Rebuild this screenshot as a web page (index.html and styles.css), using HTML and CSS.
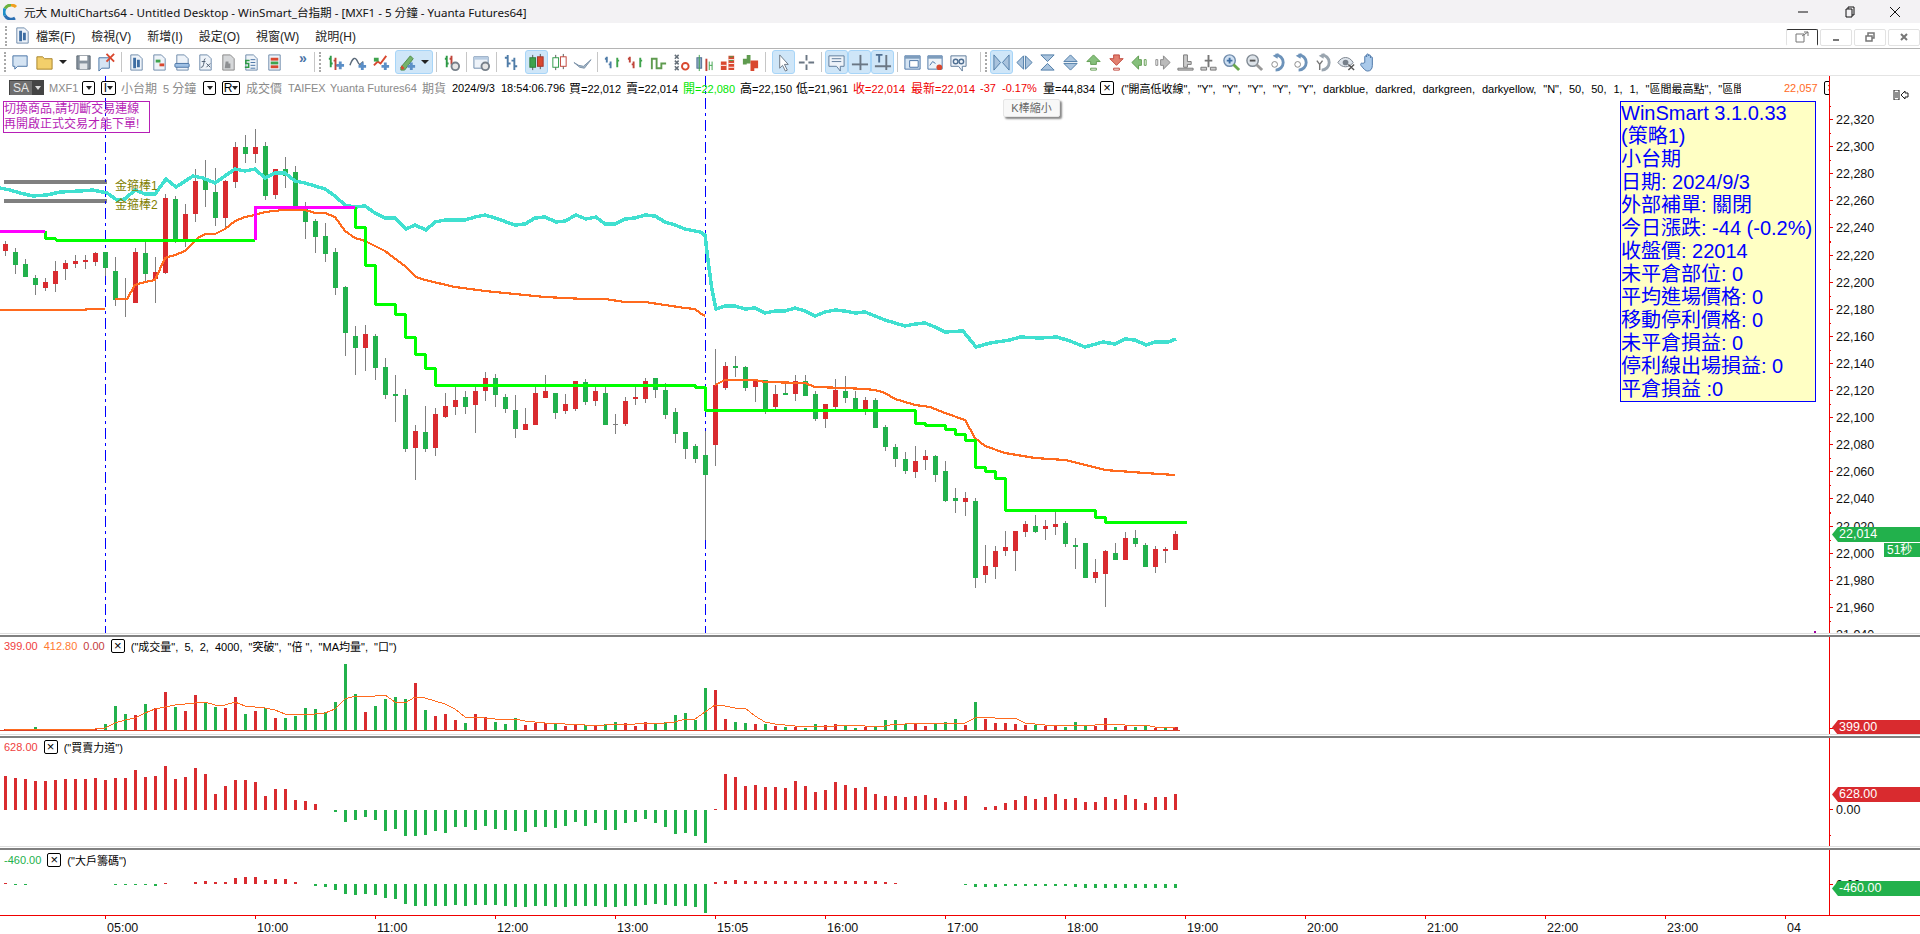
FILE: index.html
```html
<!DOCTYPE html>
<html lang="zh-Hant">
<head>
  <meta charset="UTF-8">
  <title>元大 MultiCharts64</title>
  <link rel="stylesheet" href="styles.css">
</head>
<body>
  <svg class="defs" width="0" height="0">
    <symbol id="doc" viewBox="0 0 20 20"><path d="M4 2h8l4 4v12H4z" fill="#eef3f9" stroke="#6f8bab"/></symbol>
    <symbol id="i-new" viewBox="0 0 20 20"><path d="M2 3h15v11H7l-3 3v-3H2z" fill="#d5e4f3" stroke="#4a74a5"/></symbol>
    <symbol id="i-folder" viewBox="0 0 20 20"><path d="M2 4h6l2 2h8v11H2z" fill="#f3cf6b" stroke="#a8842a"/></symbol>
    <symbol id="i-save" viewBox="0 0 20 20"><path d="M3 3h14v14H3z" fill="#87929e" stroke="#5d6873"/><rect x="6" y="3" width="8" height="5" fill="#fff"/><rect x="6" y="11" width="8" height="6" fill="#e2e5e9"/></symbol>
    <symbol id="i-docx" viewBox="0 0 20 20"><path d="M2 5h11v11H5l-3 3z" fill="#d5e4f3" stroke="#4a74a5"/><path d="M10 1l8 8M18 1l-8 8" stroke="#d9482f" stroke-width="2"/></symbol>
    <symbol id="i-doc1" viewBox="0 0 20 20"><use href="#doc"/><path d="M8 5v11M12 7v8" stroke="#3f6ea3" stroke-width="3"/></symbol>
    <symbol id="i-doc2" viewBox="0 0 20 20"><use href="#doc"/><rect x="6" y="7" width="5" height="3" fill="#3fa34d"/><rect x="10" y="11" width="5" height="3" fill="#d9482f"/></symbol>
    <symbol id="i-doc3" viewBox="0 0 20 20"><use href="#doc"/><rect x="2" y="11" width="15" height="4" rx="1" fill="#9fc0e4" stroke="#4a74a5"/></symbol>
    <symbol id="i-doc4" viewBox="0 0 20 20"><use href="#doc"/><path d="M10 6c-2 0-1 3-2 6s-1 3-3 3M6 9h4M11 11l4 4M15 11l-4 4" fill="none" stroke="#4a5b6e"/></symbol>
    <symbol id="i-doc5" viewBox="0 0 20 20"><path d="M4 2h8l4 4v12H4z" fill="#d6d8da" stroke="#888"/><path d="M7 9h3v2h2v5H6z" fill="#8d8f92"/></symbol>
    <symbol id="i-doc6" viewBox="0 0 20 20"><use href="#doc"/><path d="M9 7h5M9 10h5M9 13h5M9 16h5" stroke="#4a74a5"/><path d="M8 8H4v3h3v4H3" fill="none" stroke="#2e9a47" stroke-width="1.6"/></symbol>
    <symbol id="i-doc7" viewBox="0 0 20 20"><path d="M4 2h12v16H4z" fill="#eef3f9" stroke="#6f8bab"/><rect x="6" y="5" width="8" height="3" fill="#d9482f"/><rect x="6" y="9" width="8" height="3" fill="#3fa34d"/><rect x="6" y="13" width="8" height="3" fill="#d9482f"/></symbol>
    <symbol id="i-bars" viewBox="0 0 20 20"><path d="M5 3v12M5 6H3M5 11h2" stroke="#2e9a47" stroke-width="2" fill="none"/><path d="M10 5v13M10 8H8M10 13h2" stroke="#c0453a" stroke-width="2" fill="none"/><path d="M15 9v8M11 13h8" stroke="#5b8fc7" stroke-width="3"/></symbol>
    <symbol id="i-wave" viewBox="0 0 20 20"><path d="M1 13c3-9 6-9 8-4s3 3 6 0" fill="none" stroke="#5b6a7a" stroke-width="1.5"/><path d="M14 10v8M10 14h8" stroke="#5b8fc7" stroke-width="3"/></symbol>
    <symbol id="i-trend" viewBox="0 0 20 20"><path d="M2 13l4-4 3 2 6-8" fill="none" stroke="#d9482f" stroke-width="2"/><rect x="2" y="5" width="5" height="4" fill="#3fa34d"/><path d="M14 10v8M10 14h8" stroke="#5b8fc7" stroke-width="3"/></symbol>
    <symbol id="i-pencil" viewBox="0 0 20 20"><path d="M3 15L13 3l3 3L7 18H3z" fill="#74b36b" stroke="#4f8a47"/><path d="M3 15l1-2 3 3-3 2z" fill="#d9482f"/><path d="M14 10v8M10 14h8" stroke="#5b8fc7" stroke-width="3"/></symbol>
    <symbol id="i-gearb" viewBox="0 0 20 20"><path d="M5 3v12M5 6H3M5 11h2" stroke="#2e9a47" stroke-width="2" fill="none"/><path d="M10 3v9M10 6H8" stroke="#c0453a" stroke-width="2" fill="none"/><circle cx="14" cy="14" r="4" fill="#e6e6e6" stroke="#77808a" stroke-width="2"/></symbol>
    <symbol id="i-wgear" viewBox="0 0 20 20"><path d="M2 4h15v12H2z" fill="#eef3f9" stroke="#6f8bab"/><path d="M2 4h15v3H2z" fill="#b8cce2"/><circle cx="14" cy="14" r="4" fill="#e6e6e6" stroke="#77808a" stroke-width="2"/></symbol>
    <symbol id="i-hlc" viewBox="0 0 20 20"><path d="M6 2v13M6 5H3M6 11h3M13 5v13M13 8h-3M13 14h3" fill="none" stroke="#4f7ca8" stroke-width="2"/></symbol>
    <symbol id="i-cand" viewBox="0 0 20 20"><path d="M6 2v16M14 1v16" stroke="#555"/><rect x="3" y="5" width="6" height="10" fill="#3fa34d" stroke="#2e7d3a"/><rect x="11" y="4" width="6" height="10" fill="#d9482f" stroke="#a3322a"/></symbol>
    <symbol id="i-candh" viewBox="0 0 20 20"><path d="M6 2v16M14 1v16" stroke="#555"/><rect x="3" y="5" width="6" height="10" fill="#fff" stroke="#2e9a47"/><rect x="11" y="4" width="6" height="10" fill="#fff" stroke="#c0453a"/></symbol>
    <symbol id="i-line" viewBox="0 0 20 20"><path d="M1 10l5 3 5 1 8-7-7 9-5-1z" fill="#a7bacb" stroke="#7a90a6"/></symbol>
    <symbol id="i-pg1" viewBox="0 0 20 20"><path d="M4 4v6M4 6H2M8 9v7M8 12H6" stroke="#4f7ca8" stroke-width="2" fill="none"/><path d="M15 5v10M15 8h2" stroke="#3fa34d" stroke-width="2" fill="none"/></symbol>
    <symbol id="i-pg2" viewBox="0 0 20 20"><path d="M4 4v6M4 6H2M8 9v7M8 12H6" stroke="#c0453a" stroke-width="2" fill="none"/><path d="M15 5v10M15 8h2" stroke="#3fa34d" stroke-width="2" fill="none"/></symbol>
    <symbol id="i-sq" viewBox="0 0 20 20"><path d="M3 17V6h5v10h5v-5h5" fill="none" stroke="#5f9b4f" stroke-width="2"/></symbol>
    <symbol id="i-xo" viewBox="0 0 20 20"><path d="M3 2l4 4M7 2L3 6M3 8l4 4M7 8l-4 4M3 14l4 4M7 14l-4 4" stroke="#66707a" stroke-width="1.6"/><circle cx="14" cy="14" r="3.5" fill="none" stroke="#d9482f" stroke-width="2"/></symbol>
    <symbol id="i-ch" viewBox="0 0 20 20"><rect x="2" y="5" width="5" height="11" fill="#8fa8c4" stroke="#4f6f92"/><path d="M12 6v13" stroke="#c0453a" stroke-width="2"/><path d="M4.5 2v17M15 9v9M18 9v9M15 13h3" stroke="#3fa34d"/></symbol>
    <symbol id="i-blk" viewBox="0 0 20 20"><path d="M3 9h6v9H3zM11 3h6v15h-6z" fill="#d9482f"/><path d="M3 13h6M11 7h6M11 11h6M11 15h6" stroke="#fff"/><path d="M12 4h4M12 8h4" stroke="#3fa34d"/></symbol>
    <symbol id="i-vol" viewBox="0 0 20 20"><path d="M2 6h4v6H2zM6 2h4v9H6z" fill="#5f9b4f"/><path d="M10 8h4v11h-4zM14 8h4v8h-4z" fill="#d9482f"/></symbol>
    <symbol id="i-cur" viewBox="0 0 20 20"><path d="M6 2v14l3-3 3 6 2-1-3-6h4z" fill="#fff" stroke="#6b7784"/></symbol>
    <symbol id="i-cross" viewBox="0 0 20 20"><path d="M10 2v6M10 12v6M2 10h6M12 10h6" stroke="#6b7784" stroke-width="2"/></symbol>
    <symbol id="i-note" viewBox="0 0 20 20"><path d="M2 3h16v11h-4v5l-4-5H2z" fill="#eef3f9" stroke="#5e7a99"/><path d="M5 6h10M5 9h10" stroke="#5e7a99"/></symbol>
    <symbol id="i-hl" viewBox="0 0 20 20"><path d="M11 2v16" stroke="#6b7784" stroke-width="2"/><path d="M2 12h17" stroke="#6b7784" stroke-width="2"/></symbol>
    <symbol id="i-tl" viewBox="0 0 20 20"><path d="M14 2v16M2 14h17" stroke="#6b7784" stroke-width="2"/><path d="M3 2h7M6.5 2v8" stroke="#4f6f92" stroke-width="2"/></symbol>
    <symbol id="i-win" viewBox="0 0 20 20"><path d="M2 3h16v14H2z" fill="#d5e4f3" stroke="#4a74a5"/><path d="M2 3h16v3H2z" fill="#7d9cbc"/><path d="M7 8h9v7H7z" fill="#fff" stroke="#4a74a5"/></symbol>
    <symbol id="i-wchart" viewBox="0 0 20 20"><path d="M2 3h15v14H2z" fill="#eef3f9" stroke="#4a74a5"/><path d="M2 3h15v3H2z" fill="#7d9cbc"/><path d="M4 13l3-4 3 2" fill="none" stroke="#4a74a5"/><circle cx="14" cy="15" r="3" fill="#d9482f"/></symbol>
    <symbol id="i-find" viewBox="0 0 20 20"><path d="M2 3h16v11h-4v5l-4-5H2z" fill="#eef3f9" stroke="#5e7a99"/><circle cx="7" cy="9" r="2.4" fill="none" stroke="#4f6f92" stroke-width="1.5"/><circle cx="13" cy="9" r="2.4" fill="none" stroke="#4f6f92" stroke-width="1.5"/></symbol>
    <symbol id="i-hshrink" viewBox="0 0 20 20"><path d="M2 2l7 8-7 8zM18 2l-7 8 7 8z" fill="#a9c3dd" stroke="#4f7ca8"/></symbol>
    <symbol id="i-hgrow" viewBox="0 0 20 20"><path d="M9 3l-7 7 7 7zM11 3l7 7-7 7z" fill="#a9c3dd" stroke="#4f7ca8"/></symbol>
    <symbol id="i-vshrink" viewBox="0 0 20 20"><path d="M3 2h14l-7 7zM3 18h14l-7-7z" fill="#a9c3dd" stroke="#4f7ca8"/></symbol>
    <symbol id="i-vgrow" viewBox="0 0 20 20"><path d="M3 9l7-7 7 7zM3 11l7 7 7-7z" fill="#a9c3dd" stroke="#4f7ca8"/></symbol>
    <symbol id="i-up" viewBox="0 0 20 20"><path d="M10 2l7 7h-4v3H7V9H3z" fill="#86c07c" stroke="#5f9b4f"/><path d="M7 16h6v2H7z" fill="#fff" stroke="#5f9b4f"/></symbol>
    <symbol id="i-down" viewBox="0 0 20 20"><path d="M7 2h6v4h4l-7 7-7-7h4z" fill="#e28070" stroke="#c0453a"/><path d="M7 16h6v2H7z" fill="#fff" stroke="#c0453a"/></symbol>
    <symbol id="i-left" viewBox="0 0 20 20"><path d="M2 10l7-7v4h3v6H9v4z" fill="#86c07c" stroke="#5f9b4f"/><path d="M15 7h2v6h-2z" fill="#fff" stroke="#5f9b4f"/></symbol>
    <symbol id="i-right" viewBox="0 0 20 20"><path d="M18 10l-7-7v4H8v6h3v4z" fill="#bbb" stroke="#888"/><path d="M3 7h2v6H3z" fill="#fff" stroke="#888"/></symbol>
    <symbol id="i-tee" viewBox="0 0 20 20"><path d="M8 2h4v7h4v3H12v3H8z" fill="#ccc" stroke="#777"/><path d="M2 16h16v2H2z" fill="#ccc" stroke="#777"/></symbol>
    <symbol id="i-tee2" viewBox="0 0 20 20"><path d="M10 2v13M6 8h8" stroke="#777" stroke-width="2"/><path d="M2 15h6v3H2zM12 15h6v3h-6z" fill="#ccc" stroke="#777"/></symbol>
    <symbol id="i-zin" viewBox="0 0 20 20"><circle cx="8" cy="8" r="6" fill="#cfe0f2" stroke="#6f8bab" stroke-width="1.5"/><path d="M12 12l6 6" stroke="#6aa84f" stroke-width="3"/><path d="M8 5v6M5 8h6" stroke="#3f6ea3" stroke-width="2"/></symbol>
    <symbol id="i-zout" viewBox="0 0 20 20"><circle cx="8" cy="8" r="6" fill="#dde3e9" stroke="#808a94" stroke-width="1.5"/><path d="M12 12l6 6" stroke="#999" stroke-width="3"/><path d="M5 8h6" stroke="#555" stroke-width="2"/></symbol>
    <symbol id="i-rot" viewBox="0 0 20 20"><path d="M8 2a8 8 0 1 1 0 16" fill="none" stroke="#6d93ba" stroke-width="3"/><path d="M11 0L5 3l5 3z" fill="#6d93ba"/><circle cx="7" cy="12" r="3" fill="#fff" stroke="#888"/></symbol>
    <symbol id="i-roty" viewBox="0 0 20 20"><path d="M8 2a8 8 0 1 1 0 16" fill="none" stroke="#9aa5af" stroke-width="3"/><path d="M11 0L5 3l5 3z" fill="#9aa5af"/><path d="M3 8l3 4 3-4M6 12v6" fill="none" stroke="#777" stroke-width="1.5"/></symbol>
    <symbol id="i-eye" viewBox="0 0 20 20"><path d="M1 10c4-7 12-7 16 0-4 6-12 6-16 0z" fill="#dfe5ec" stroke="#77808a"/><circle cx="9" cy="10" r="3" fill="#77808a"/><path d="M12 12l6 6M18 12l-6 6" stroke="#555" stroke-width="1.5"/></symbol>
    <symbol id="i-hand" viewBox="0 0 20 20"><path d="M5 10V4a1 1 0 0 1 2 0V2a1 1 0 0 1 2 0v1a1 1 0 0 1 2 0v2a1 1 0 0 1 2 0v8c0 4-2 6-5 6-2 0-4-2-7-6-1-2 1-3 2-2z" fill="#a9c9ea" stroke="#4a74a5"/></symbol>
  </svg>

  <header class="titlebar">
    <svg class="logo" viewBox="0 0 16 16">
      <path d="M8 1a7 7 0 0 0-6 3.5" fill="none" stroke="#6cb33f" stroke-width="3"/>
      <path d="M2 4.500a7 7 0 0 0 0 7" fill="none" stroke="#1f8fc9" stroke-width="3"/>
      <path d="M2 11.500A7 7 0 0 0 12 14" fill="none" stroke="#2b6fb3" stroke-width="3"/>
      <path d="M8 1a7 7 0 0 1 5 2" fill="none" stroke="#f0a020" stroke-width="3"/>
    </svg>
    <span class="title">元大 MultiCharts64 - Untitled Desktop - WinSmart_台指期 - [MXF1 - 5 分鐘 - Yuanta Futures64]</span>
    <div class="winctl">
      <svg viewBox="0 0 12 12"><path d="M1 6h10" stroke="#111"/></svg>
      <svg viewBox="0 0 12 12"><path d="M3 3h6v8H3zM5 3V1h6v8H9" fill="none" stroke="#111"/></svg>
      <svg viewBox="0 0 12 12"><path d="M1 1l10 10M11 1L1 11" stroke="#111"/></svg>
    </div>
  </header>

  <nav class="menubar">
    <i class="grip"></i>
    <svg class="ico menu-ico"><use href="#i-doc1"/></svg>
    <ul class="menu">
      <li>檔案(F)</li>
      <li>檢視(V)</li>
      <li>新增(I)</li>
      <li>設定(O)</li>
      <li>視窗(W)</li>
      <li>說明(H)</li>
    </ul>
    <div class="mdi">
      <button class="active"><svg viewBox="0 0 14 12"><path d="M1 3h8v8H1zM7 5l6-4M9 1h4v4" fill="none" stroke="#777"/></svg></button>
      <button><svg viewBox="0 0 14 12"><path d="M4 9h6" stroke="#777" stroke-width="2"/></svg></button>
      <button><svg viewBox="0 0 14 12"><path d="M3 5h6v5H3zM5 5V2h6v5H9" fill="none" stroke="#777" stroke-width="1.5"/></svg></button>
      <button><svg viewBox="0 0 14 12"><path d="M4 3l6 6M10 3L4 9" stroke="#777" stroke-width="2"/></svg></button>
    </div>
  </nav>

  <div class="toolbar">
    <i class="grip"></i>
    <span class="tool"><svg class="ico"><use href="#i-new"/></svg></span>
    <span class="tool ml1"><svg class="ico"><use href="#i-folder"/></svg></span>
    <span class="caret"></span>
    <span class="tool ml2"><svg class="ico"><use href="#i-save"/></svg></span>
    <span class="tool"><svg class="ico"><use href="#i-docx"/></svg></span>
    <i class="sep"></i>
    <span class="tool"><svg class="ico"><use href="#i-doc1"/></svg></span>
    <span class="tool"><svg class="ico"><use href="#i-doc2"/></svg></span>
    <span class="tool"><svg class="ico"><use href="#i-doc3"/></svg></span>
    <span class="tool"><svg class="ico"><use href="#i-doc4"/></svg></span>
    <span class="tool"><svg class="ico"><use href="#i-doc5"/></svg></span>
    <span class="tool"><svg class="ico"><use href="#i-doc6"/></svg></span>
    <span class="tool"><svg class="ico"><use href="#i-doc7"/></svg></span>
    <span class="more">»</span>
    <i class="sep tight"></i>
    <i class="grip"></i>
    <span class="tool"><svg class="ico"><use href="#i-bars"/></svg></span>
    <span class="tool"><svg class="ico"><use href="#i-wave"/></svg></span>
    <span class="tool"><svg class="ico"><use href="#i-trend"/></svg></span>
    <span class="combo ml2"><svg class="ico"><use href="#i-pencil"/></svg><span class="caret"></span></span>
    <i class="sep"></i>
    <span class="tool"><svg class="ico"><use href="#i-gearb"/></svg></span>
    <i class="sep"></i>
    <span class="tool"><svg class="ico"><use href="#i-wgear"/></svg></span>
    <i class="sep"></i>
    <span class="tool"><svg class="ico"><use href="#i-hlc"/></svg></span>
    <span class="tool on ml2"><svg class="ico"><use href="#i-cand"/></svg></span>
    <span class="tool"><svg class="ico"><use href="#i-candh"/></svg></span>
    <span class="tool"><svg class="ico"><use href="#i-line"/></svg></span>
    <i class="sep"></i>
    <span class="tool"><svg class="ico"><use href="#i-pg1"/></svg></span>
    <span class="tool"><svg class="ico"><use href="#i-pg2"/></svg></span>
    <span class="tool"><svg class="ico"><use href="#i-sq"/></svg></span>
    <span class="tool"><svg class="ico"><use href="#i-xo"/></svg></span>
    <span class="tool"><svg class="ico"><use href="#i-ch"/></svg></span>
    <span class="tool"><svg class="ico"><use href="#i-blk"/></svg></span>
    <span class="tool"><svg class="ico"><use href="#i-vol"/></svg></span>
    <i class="sep"></i>
    <span class="tool on ml3"><svg class="ico"><use href="#i-cur"/></svg></span>
    <span class="tool"><svg class="ico"><use href="#i-cross"/></svg></span>
    <i class="sep"></i>
    <span class="tool on"><svg class="ico"><use href="#i-note"/></svg></span>
    <span class="tool on"><svg class="ico"><use href="#i-hl"/></svg></span>
    <span class="tool on"><svg class="ico"><use href="#i-tl"/></svg></span>
    <i class="sep"></i>
    <span class="tool"><svg class="ico"><use href="#i-win"/></svg></span>
    <span class="tool"><svg class="ico"><use href="#i-wchart"/></svg></span>
    <span class="tool"><svg class="ico"><use href="#i-find"/></svg></span>
    <i class="sep end"></i>
    <i class="grip"></i>
    <span class="tool on"><svg class="ico"><use href="#i-hshrink"/></svg></span>
    <span class="tool"><svg class="ico"><use href="#i-hgrow"/></svg></span>
    <span class="tool"><svg class="ico"><use href="#i-vshrink"/></svg></span>
    <span class="tool"><svg class="ico"><use href="#i-vgrow"/></svg></span>
    <span class="tool"><svg class="ico"><use href="#i-up"/></svg></span>
    <span class="tool"><svg class="ico"><use href="#i-down"/></svg></span>
    <span class="tool"><svg class="ico"><use href="#i-left"/></svg></span>
    <span class="tool"><svg class="ico"><use href="#i-right"/></svg></span>
    <span class="tool"><svg class="ico"><use href="#i-tee"/></svg></span>
    <span class="tool"><svg class="ico"><use href="#i-tee2"/></svg></span>
    <span class="tool"><svg class="ico"><use href="#i-zin"/></svg></span>
    <span class="tool"><svg class="ico"><use href="#i-zout"/></svg></span>
    <span class="tool"><svg class="ico"><use href="#i-rot"/></svg></span>
    <span class="tool"><svg class="ico"><use href="#i-rot"/></svg></span>
    <span class="tool"><svg class="ico"><use href="#i-roty"/></svg></span>
    <span class="tool"><svg class="ico"><use href="#i-eye"/></svg></span>
    <span class="tool"><svg class="ico"><use href="#i-hand"/></svg></span>
  </div>

  <main class="chart">
    <section class="pane pane-price">
      <svg class="plot" id="plot-price" viewBox="0 76 1920 557"></svg>
      <div class="legend legend-price">
        <span class="sa"><b>SA</b><i class="sa-arrow"></i></span>
        <span class="muted">MXF1</span>
        <span class="pick"><i class="caret"></i></span>
        <span class="pick wide">I<i class="caret"></i></span>
        <span class="muted zh">小台期</span>
        <span class="muted">5 <span class="zh">分鐘</span></span>
        <span class="pick"><i class="caret"></i></span>
        <span class="pick wider">R<i class="caret"></i></span>
        <span class="muted zh">成交價</span>
        <span class="muted">TAIFEX</span>
        <span class="muted">Yuanta Futures64</span>
        <span class="muted zh">期貨</span>
        <span>2024/9/3</span>
        <span>18:54:06.796</span>
        <span><span class="zh">買</span>=22,012</span>
        <span><span class="zh">賣</span>=22,014</span>
        <span class="lime"><span class="zh">開</span>=22,080</span>
        <span><span class="zh">高</span>=22,150</span>
        <span><span class="zh">低</span>=21,961</span>
        <span class="red"><span class="zh">收</span>=22,014</span>
        <span class="red"><span class="zh">最新</span>=22,014</span>
        <span class="red">-37</span>
        <span class="red">-0.17%</span>
        <span><span class="zh">量</span>=44,834</span>
        <span class="xbox">×</span>
        <span class="args">("開高低收線",  "Y",  "Y",  "Y",  "Y",  "Y",  darkblue,  darkred,  darkgreen,  darkyellow,  "N",  50,  50,  1,  1,  "區間最高點",  "區間</span>
        <span class="last">22,057</span>
        <span class="xbox">×</span>
      </div>
      <div class="notice">切換商品,請切斷交易連線<br>再開啟正式交易才能下單!</div>
      <span class="gold gold-1">金箍棒1</span>
      <span class="gold gold-2">金箍棒2</span>
      <div class="tooltip">K棒縮小</div>
      <div class="status">
        <div>WinSmart 3.1.0.33</div>
        <div>(策略1)</div>
        <div>小台期</div>
        <div>日期: 2024/9/3</div>
        <div>外部補單: 關閉</div>
        <div>今日漲跌: -44 (-0.2%)</div>
        <div>收盤價: 22014</div>
        <div>未平倉部位: 0</div>
        <div>平均進場價格: 0</div>
        <div>移動停利價格: 0</div>
        <div>未平倉損益: 0</div>
        <div>停利線出場損益: 0</div>
        <div>平倉損益 :0</div>
      </div>
      <svg class="side-ico" viewBox="0 0 16 10"><path d="M1 0h5v10H1zM2 3h3M2 5h3M2 7h3" fill="none" stroke="#222"/><path d="M8 5l4-4v2h3v4h-3v2z" fill="#fff" stroke="#222"/></svg>
      <span class="tag up tag-price">22,014</span>
      <span class="tag up tag-secs">51秒</span>
    </section>
    <div class="divider"></div>

    <section class="pane pane-vol">
      <svg class="plot" id="plot-vol" viewBox="0 637 1920 97"></svg>
      <div class="legend">
        <span class="v-red">399.00</span>
        <span class="v-orange">412.80</span>
        <span class="v-dark">0.00</span>
        <span class="xbox">×</span>
        <span class="args">("成交量",  5,  2,  4000,  "突破",  "倍 ",  "MA均量",  "口")</span>
      </div>
      <span class="tag down tag-vol">399.00</span>
    </section>
    <div class="divider"></div>

    <section class="pane pane-force">
      <svg class="plot" id="plot-force" viewBox="0 738 1920 108"></svg>
      <div class="legend">
        <span class="v-red">628.00</span>
        <span class="xbox">×</span>
        <span class="args">("買賣力道")</span>
      </div>
      <span class="tag down tag-force">628.00</span>
    </section>
    <div class="divider"></div>

    <section class="pane pane-big">
      <svg class="plot" id="plot-big" viewBox="0 850 1920 65"></svg>
      <div class="legend">
        <span class="v-green">-460.00</span>
        <span class="xbox">×</span>
        <span class="args">("大戶籌碼")</span>
      </div>
      <span class="tag up tag-big">-460.00</span>
    </section>

    <svg class="timeaxis" id="plot-time" viewBox="0 915 1920 19"></svg>
  </main>

  <script src="chart.js"></script>
</body>
</html>
```

FILE: styles.css
```css
* {
  box-sizing: border-box;
}

html, body {
  margin: 0;
  height: 934px;
  overflow: hidden;
}

body {
  background: #fff;
  color: #000;
  font-family: "Liberation Sans", "Noto Sans CJK TC", sans-serif;
  font-size: 12px;
}

.defs {
  position: absolute;
}

.titlebar {
  display: flex;
  align-items: center;
  height: 23px;
  background: #f3f2f4;
  padding-left: 3px;
}

.logo {
  width: 16px;
  height: 16px;
}

.title {
  margin-left: 5px;
  font-family: "Noto Sans", "Noto Sans CJK TC", sans-serif;
  font-size: 11.6px;
  color: #111;
}

.winctl {
  display: flex;
  margin-left: auto;
  gap: 34px;
  padding-right: 19px;
}

.winctl svg {
  width: 12px;
  height: 12px;
}

.menubar {
  display: flex;
  align-items: center;
  height: 26px;
  padding-left: 5px;
  border-bottom: 1px solid #b4b4b4;
}

.grip {
  display: block;
  width: 2px;
  height: 20px;
  margin-right: 3px;
  border-left: 2px dotted #a8a8a8;
}

.menu-ico {
  margin-left: 3px;
}

.menu {
  display: flex;
  gap: 16px;
  list-style: none;
  margin: 0 0 0 4px;
  padding: 0;
  color: #222;
}

.mdi {
  display: flex;
  gap: 2px;
  margin-left: auto;
  margin-top: 3px;
}

.mdi button {
  display: flex;
  align-items: center;
  justify-content: center;
  width: 32px;
  height: 17px;
  padding: 0;
  background: #fff;
  border: 1px solid #e2e2e2;
  border-radius: 2px;
}

.mdi button.active {
  border-color: #333 #333 #fff #e2e2e2;
}

.mdi svg {
  width: 14px;
  height: 12px;
}

.toolbar {
  display: flex;
  align-items: center;
  height: 27px;
  padding-left: 4px;
  border-bottom: 1px solid #e4e4e4;
}

.tool {
  display: flex;
  align-items: center;
  justify-content: center;
  flex: none;
  width: 23px;
  height: 24px;
}

.tool.on {
  background: #cfe6f8;
  border: 1px solid #a7d5f8;
  border-radius: 3px;
}

.ml1 { margin-left: 1px; }
.ml2 { margin-left: 2px; }
.ml3 { margin-left: 3px; }

.ico {
  width: 19px;
  height: 19px;
  flex: none;
}

.caret {
  display: inline-block;
  flex: none;
  width: 0;
  height: 0;
  margin: 0 3px;
  border-left: 4px solid transparent;
  border-right: 4px solid transparent;
  border-top: 4px solid #222;
}

.combo {
  display: flex;
  align-items: center;
  flex: none;
  width: 38px;
  height: 24px;
  padding-left: 2px;
  background: #cfe6f8;
  border: 1px solid #a7d5f8;
  border-radius: 3px;
}

.combo .caret {
  margin-left: 4px;
}

.sep {
  display: block;
  flex: none;
  width: 1px;
  height: 20px;
  margin: 0 3px;
  background: #c6c6c6;
}

.sep.tight {
  margin: 0 4px 0 0;
}

.sep.end {
  margin: 0 4px 0 10px;
}

.more {
  flex: none;
  width: 22px;
  margin-left: 6px;
  color: #4a74a5;
  font-size: 14px;
  font-weight: bold;
  text-align: center;
  padding-bottom: 8px;
}

.chart {
  display: flex;
  flex-direction: column;
}

.pane {
  position: relative;
  overflow: hidden;
  flex: none;
}

.pane-price { height: 557px; }
.pane-vol { height: 97px; }
.pane-force { height: 108px; }
.pane-big { height: 65px; }

.plot {
  position: absolute;
  left: 0;
  top: 0;
  width: 1920px;
  height: 100%;
}

.divider {
  flex: none;
  height: 4px;
  border-top: 1px solid #dedede;
  border-bottom: 2px solid #808080;
}

.legend {
  position: relative;
  display: flex;
  align-items: center;
  gap: 6px;
  height: 16px;
  width: 1829px;
  overflow: hidden;
  padding-left: 4px;
  font-size: 11px;
  white-space: pre;
}

.pane-vol .legend,
.pane-force .legend {
  margin-top: 1px;
}

.pane-big .legend {
  margin-top: 2px;
}

.legend-price {
  display: grid;
  grid-template-columns: 39px 33px 19px 20px 42px 40px 19px 24px 42px 42px 92px 30px 49px 68px 57px 57px 57px 56px 57px 58px 69px 22px 41px 57px 21px 663px 40px 14px;
  gap: 0;
  justify-items: start;
  margin-top: 3px;
  padding-left: 10px;
}

.zh {
  font-size: 12px;
}

.muted { color: #8a8a8a; }
.lime { color: #00e600; }
.red { color: #f00000; }
.v-red { color: #ef4040; }
.v-orange { color: #ff7a30; }
.v-dark { color: #c43c3c; }
.v-green { color: #22b14c; }

.sa {
  display: flex;
  flex: none;
  width: 33px;
  height: 14px;
  background: #6e6e6e;
  outline: 1px solid #444;
}

.sa b {
  width: 22px;
  color: #e8e8e8;
  font-weight: normal;
  font-size: 12px;
  text-align: center;
  line-height: 14px;
}

.sa-arrow {
  display: flex;
  align-items: center;
  justify-content: center;
  width: 11px;
  background: #444;
}

.sa-arrow::after {
  content: "";
  border-left: 3px solid transparent;
  border-right: 3px solid transparent;
  border-top: 4px solid #ddd;
}

.pick {
  display: flex;
  align-items: center;
  justify-content: center;
  flex: none;
  width: 13px;
  height: 14px;
  background: #fff;
  border: 1px solid #000;
  border-radius: 2px;
  font-size: 12px;
}

.pick .caret {
  margin: 0;
  border-left-width: 3px;
  border-right-width: 3px;
}

.pick.wide { width: 15px; }
.pick.wider { width: 18px; }

.xbox {
  flex: none;
  width: 14px;
  height: 14px;
  background: #fff;
  border: 1px solid #000;
  border-radius: 2px;
  text-align: center;
  line-height: 11px;
  font-size: 13px;
}

.args {
  flex: none;
  overflow: hidden;
}

.legend-price .args {
  width: 620px;
  word-spacing: 0.4px;
}

.last {
  color: #ff6a1e;
}

.notice {
  position: absolute;
  left: 3px;
  top: 25px;
  width: 147px;
  height: 32px;
  border: 1px solid #b61fb6;
  color: #b61fb6;
  line-height: 15px;
  white-space: nowrap;
}

.gold {
  position: absolute;
  left: 115px;
  color: #808000;
}

.gold-1 { top: 100px; }
.gold-2 { top: 119px; }

.tooltip {
  position: absolute;
  left: 1003px;
  top: 23px;
  width: 57px;
  height: 18px;
  background: #f8f8f8;
  border: 1px solid #e6e6e6;
  border-radius: 2px;
  box-shadow: 2px 2px 2px #8a8a8a;
  color: #666;
  font-size: 11px;
  line-height: 16px;
  text-align: center;
}

.status {
  position: absolute;
  left: 1620px;
  top: 25px;
  width: 196px;
  height: 301px;
  background: #ffffc4;
  border: 1px solid #0000ff;
  color: #0000ff;
  font-size: 20px;
  line-height: 23px;
  white-space: nowrap;
}

.side-ico {
  position: absolute;
  left: 1893px;
  top: 14px;
  width: 16px;
  height: 10px;
}

.tag {
  position: absolute;
  left: 1832px;
  width: 88px;
  height: 15px;
  padding-left: 7px;
  color: #fff;
  font-size: 12.5px;
  line-height: 15px;
  clip-path: polygon(0 50%, 6px 0, 100% 0, 100% 100%, 6px 100%);
}

.tag.up { background: #22b14c; }
.tag.down { background: #d92b2f; }

.tag-price { top: 451px; }
.tag-vol { top: 83px; }
.tag-force { top: 49px; }
.tag-big { top: 31px; }

.tag-secs {
  left: 1884px;
  top: 467px;
  width: 36px;
  height: 14px;
  padding-left: 3px;
  clip-path: none;
  line-height: 14px;
  font-size: 12px;
}

.timeaxis {
  display: block;
  flex: none;
  width: 1920px;
  height: 19px;
}

.axis-label {
  font-size: 12.5px;
  fill: #111;
}
```

FILE: chart.js
```js
const RED = "#d92b2f";
const GREEN = "#22b14c";
const WICK = "#808080";
const AXIS = "#f00000";

// top of wick, body top, body bottom, bottom of wick, colour (page pixels)
const candles = [
  [241,244,251,256,"r"],[248,252,265,274,"g"],[259,264,277,277,"g"],[275,278,285,295,"g"],[278,282,288,291,"r"],
  [261,271,284,292,"r"],[260,263,269,280,"r"],[255,261,264,268,"r"],[255,260,262,269,"r"],[252,253,262,266,"r"],
  [252,252,268,276,"g"],[257,271,300,306,"g"],[278,298,300,317,"r"],[248,252,303,303,"r"],[242,253,274,282,"g"],
  [257,272,279,303,"r"],[194,198,273,274,"r"],[196,199,240,243,"g"],[204,214,240,247,"r"],[169,181,214,222,"r"],
  [160,180,190,207,"g"],[168,192,218,226,"g"],[180,181,218,229,"r"],[142,147,182,188,"r"],[135,147,154,163,"g"],
  [129,147,154,163,"r"],[142,146,196,200,"g"],[169,169,195,199,"r"],[157,169,176,188,"g"],[166,172,207,210,"g"],
  [202,207,222,239,"g"],[219,221,237,253,"g"],[223,236,254,262,"g"],[248,252,288,295,"g"],[286,287,333,356,"g"],
  [326,336,348,375,"g"],[325,334,348,371,"r"],[334,336,368,380,"g"],[358,367,395,399,"g"],[375,394,396,422,"g"],
  [389,395,449,452,"g"],[425,431,448,480,"r"],[406,432,449,452,"g"],[408,414,448,456,"r"],[393,406,417,418,"r"],
  [385,400,407,415,"r"],[391,397,407,414,"g"],[385,391,405,433,"r"],[372,378,391,401,"r"],[374,378,395,407,"g"],
  [394,397,409,413,"g"],[395,410,429,438,"g"],[408,424,430,430,"r"],[387,393,425,425,"r"],[375,391,398,398,"r"],
  [393,393,413,419,"g"],[394,404,411,414,"r"],[381,381,409,411,"r"],[379,382,402,405,"g"],[387,391,401,406,"r"],
  [385,393,425,425,"g"],[414,424,425,434,"x"],[397,401,424,426,"r"],[387,397,399,405,"r"],[378,381,399,403,"r"],
  [378,378,390,398,"g"],[383,390,415,419,"g"],[408,412,434,443,"g"],[432,432,449,459,"g"],[444,446,459,463,"g"],
  [431,455,475,540,"g"],[349,385,445,466,"r"],[362,366,388,390,"r"],[356,366,368,377,"g"],[366,367,388,391,"g"],
  [380,380,387,402,"r"],[380,380,410,414,"g"],[385,394,407,410,"r"],[381,393,395,395,"g"],[375,381,394,401,"r"],
  [375,381,396,396,"g"],[391,394,419,421,"g"],[404,404,419,428,"r"],[379,390,407,409,"r"],[376,391,398,403,"g"],
  [391,398,410,410,"g"],[397,400,410,415,"r"],[398,400,428,428,"g"],[425,427,447,451,"g"],[444,447,459,467,"g"],
  [452,459,471,474,"g"],[446,461,472,478,"r"],[450,456,460,470,"r"],[455,456,475,482,"g"],[461,471,501,502,"g"],
  [488,498,501,513,"g"],[492,498,502,516,"r"],[498,501,578,588,"g"],[545,566,575,583,"r"],[546,551,567,579,"r"],
  [531,547,551,556,"r"],[531,531,551,571,"r"],[521,524,532,537,"r"],[515,526,532,533,"g"],[520,526,529,540,"r"],
  [512,524,527,535,"r"],[521,523,544,547,"g"],[538,545,547,569,"g"],[543,543,578,578,"g"],[559,572,578,583,"r"],
  [550,551,574,607,"r"],[543,553,560,560,"g"],[532,538,560,560,"r"],[530,538,544,547,"g"],[543,545,567,567,"g"],
  [546,549,567,573,"r"],[547,549,551,563,"r"],[531,534,550,550,"r"]
];

const turquoise = [0,188, 10,190, 20,193, 33,196, 47,195, 60,192, 80,191, 93,190, 107,193, 117,200, 125,199, 135,190, 145,194, 155,194, 166,179, 176,187, 193,176, 203,178, 215,183, 235,169, 245,171, 255,169, 265,178, 275,173, 285,173, 295,181, 305,183, 325,189, 335,196, 345,205, 355,207, 365,206, 375,213, 385,218, 395,218, 406,229, 415,225, 426,230, 435,222, 445,220, 465,220, 475,217, 485,215, 495,218, 515,225, 525,224, 535,218, 545,217, 556,222, 565,221, 576,215, 586,219, 596,217, 605,224, 615,224, 625,219, 635,218, 645,215, 655,216, 665,222, 675,225, 685,229, 700,232, 705,235, 708,260, 712,290, 716,309, 725,306, 735,306, 745,309, 755,308, 765,313, 775,311, 785,311, 795,308, 805,311, 815,316, 825,312, 835,310, 845,311, 855,313, 865,312, 875,316, 885,320, 895,323, 905,326, 915,324, 925,323, 935,327, 945,332, 963,331, 976,347, 990,343, 1010,340, 1020,337, 1040,338, 1057,337, 1070,341, 1085,347, 1103,342, 1115,344, 1125,339, 1135,340, 1146,345, 1155,342, 1168,342, 1176,339];

const orangeLines = [
  [0,310, 86,310, 86,309, 105,309],
  [115,299, 127,299, 135,285, 145,282, 155,280, 165,258, 175,255, 185,251, 198,238, 205,234, 215,234, 225,229, 235,221, 245,217, 255,215, 265,212, 283,210, 305,210, 315,213, 325,213, 335,217, 345,231, 355,238, 365,241, 375,246, 385,251, 405,266, 416,277, 425,280, 455,287, 485,291, 515,294, 545,297, 585,299, 605,299, 625,302, 645,302, 665,305, 685,308, 695,309, 700,313, 705,316],
  [715,385, 725,380, 755,380, 765,382, 805,383, 815,387, 845,388, 865,389, 875,390, 885,393, 895,399, 915,405, 930,407, 945,413, 965,420, 975,438, 985,446, 1005,453, 1035,458, 1065,460, 1090,466, 1105,470, 1145,473, 1175,475]
];

const stopLines = [
  [45,231, 45,238, 55,238, 56,240, 255,240],
  [355,207, 355,227, 365,227, 365,265, 375,265, 375,304, 395,304, 395,314, 405,314, 405,337, 415,337, 415,354, 425,354, 425,368, 435,368, 435,385, 695,385, 695,387, 705,387, 705,410, 915,410, 915,423, 925,423, 925,425, 945,425, 945,429, 955,429, 955,434, 965,434, 965,440, 975,440, 975,467, 985,467, 985,471, 995,471, 995,478, 1005,478, 1005,510, 1095,510, 1095,517, 1105,517, 1105,522, 1187,522]
];

const magentaLines = [
  [0,231, 45,231],
  [255,240, 255,207, 355,207]
];

const volume = [1,1,1,3,1,1,1,1,1,1,6,24,16,15,26,22,38,23,19,35,27,23,22,33,16,19,22,12,12,14,22,21,18,28,66,36,18,24,31,33,31,47,20,14,16,10,7,16,13,8,6,12,5,7,7,6,4,5,5,4,6,8,7,4,8,6,8,15,17,10,42,40,11,8,7,6,6,4,3,3,2,6,5,6,4,2,3,3,10,10,6,7,4,6,8,11,5,28,11,7,7,6,5,5,4,4,3,8,4,4,12,3,4,3,4,2,2,3];
const volumeColor = [
  "rrrgrrrrrr", "gggrgrrgrr", "ggrrgrgrgg", "ggggggrggg", "grgrrrgrrg", "ggrrrgrrgr",
  "ggrrrggggg", "grrggrgrgr", "ggrrggrggg", "grrgggrgrr", "rrrgrrgggr", "rgrggrgr"
].join("");

// signed bar heights, positive bars are red and negative ones green
const force = [34,32,31,29,29,30,31,31,31,32,30,32,32,40,33,34,44,31,33,42,36,16,24,30,30,28,14,21,21,10,9,6,0,-2,-12,-10,-7,-10,-21,-19,-26,-26,-25,-21,-23,-17,-17,-20,-16,-19,-20,-21,-22,-17,-17,-18,-16,-12,-16,-13,-20,-20,-13,-12,-9,-13,-17,-24,-23,-26,-33,1,36,33,24,25,23,23,22,29,24,18,20,28,25,22,23,16,14,14,13,14,15,12,8,10,14,0,3,4,7,10,14,11,13,16,11,12,8,8,13,11,15,11,7,13,13,16];

const bigMoney = [1,-1,-1,0,0,0,0,0,0,0,0,-1,-1,-1,-1,-2,1,0,0,2,3,2,2,6,7,7,4,5,5,2,0,-2,-3,-6,-10,-11,-10,-11,-14,-15,-20,-22,-22,-22,-22,-21,-22,-21,-21,-21,-22,-23,-23,-22,-22,-23,-23,-22,-22,-22,-23,-23,-22,-22,-21,-20,-21,-22,-22,-23,-29,2,3,4,3,3,3,3,3,3,3,3,3,3,3,3,3,3,2,1,0,0,0,0,0,0,-1,-3,-3,-3,-2,-2,-2,-2,-2,-2,-2,-3,-4,-4,-4,-4,-4,-4,-4,-4,-4,-4];

function rect(x, y, w, h, fill) {
  return `<rect x="${x}" y="${y}" width="${w}" height="${h}" fill="${fill}"/>`;
}

function line(points, stroke, width) {
  const pts = [];
  for (let i = 0; i < points.length; i += 2) pts.push(points[i] + "," + points[i + 1]);
  return `<polyline points="${pts.join(" ")}" fill="none" stroke="${stroke}" stroke-width="${width}" stroke-linejoin="round"/>`;
}

function centre(i) {
  return 5 + i * 10;
}

function axisLine(top, bottom) {
  return rect(1829, top, 1, bottom - top, AXIS);
}

function tick(y, len) {
  return rect(1829, y, len, 1, AXIS);
}

function axisText(x, y, text) {
  return `<text class="axis-label" x="${x}" y="${y}">${text}</text>`;
}

function drawPrice() {
  let s = "";
  s += rect(4, 180, 103, 4, "#808080") + rect(4, 199, 103, 4, "#808080");
  s += `<g stroke="#0000ff" stroke-dasharray="11 4 3 4">`;
  s += `<line x1="105.5" y1="76" x2="105.5" y2="633"/><line x1="705.5" y1="76" x2="705.5" y2="633"/></g>`;

  candles.forEach((c, i) => {
    const x = centre(i);
    s += rect(x, c[0], 1, c[3] - c[0], WICK);
    if (c[4] === "x") s += rect(x - 2, c[1], 5, 1, WICK);
    else s += rect(x - 2, c[1], 5, c[2] - c[1], c[4] === "r" ? RED : GREEN);
  });

  s += line(turquoise, "#40e0d0", 3.5);
  orangeLines.forEach(l => { s += line(l, "#ff6a1e", 2.2); });
  stopLines.forEach(l => { s += line(l, "#00ff00", 3); });
  magentaLines.forEach(l => { s += line(l, "#ff00ff", 3); });

  s += axisLine(76, 633);
  for (let k = 0; k < 20; k++) {
    const y = Math.round(119 + k * 27.1);
    const price = (22320 - k * 20).toLocaleString("en-US");
    s += tick(y, 4);
    s += tick(Math.round(y + 13.5), 2);
    s += tick(Math.round(y - 13.5), 2);
    s += axisText(1836, y + 5, price);
  }
  s += rect(1814, 631, 2, 2, "#a000a0");
  document.getElementById("plot-price").innerHTML = s;
}

function drawVolume() {
  const base = 730;
  let s = "";
  volume.forEach((h, i) => {
    const colour = volumeColor[i] === "r" ? RED : GREEN;
    const last = i === volume.length - 1;
    s += rect(centre(i) - (last ? 2 : 1), base - h, last ? 5 : 3, h, colour);
  });
  s += rect(0, base, 1180, 1, "#d9432a");

  const ma = [];
  volume.forEach((h, i) => {
    const part = volume.slice(Math.max(0, i - 4), i + 1);
    const avg = part.reduce((a, b) => a + b, 0) / part.length;
    ma.push(centre(i), Math.round(base - avg));
  });
  s += line(ma, "#ff6a1e", 1);
  s += axisLine(637, 734);
  s += tick(728, 4);
  document.getElementById("plot-vol").innerHTML = s;
}

function bars(values, base) {
  let s = "";
  values.forEach((v, i) => {
    if (v === 0) return;
    const x = centre(i) - 1;
    if (v > 0) s += rect(x, base - v, 3, v, RED);
    else s += rect(x, base, 3, -v, GREEN);
  });
  return s;
}

function drawForce() {
  let s = bars(force, 810);
  s += axisLine(738, 846);
  s += tick(809, 4) + tick(835, 2);
  s += axisText(1836, 814, "0.00");
  document.getElementById("plot-force").innerHTML = s;
}

function drawBig() {
  let s = bars(bigMoney, 884);
  s += axisLine(850, 915);
  s += tick(884, 4);
  s += axisText(1836, 889, "0.00");
  document.getElementById("plot-big").innerHTML = s;
}

function drawTime() {
  const marks = [
    [105, "05:00"], [255, "10:00"], [375, "11:00"], [495, "12:00"], [615, "13:00"],
    [715, "15:05"], [825, "16:00"], [945, "17:00"], [1065, "18:00"], [1185, "19:00"],
    [1305, "20:00"], [1425, "21:00"], [1545, "22:00"], [1665, "23:00"], [1785, "04"]
  ];
  let s = rect(0, 915, 1920, 1, AXIS);
  marks.forEach(m => {
    s += rect(m[0], 915, 1, 4, AXIS);
    s += axisText(m[0] + 2, 932, m[1]);
  });
  document.getElementById("plot-time").innerHTML = s;
}

document.querySelectorAll(".plot, .timeaxis").forEach(el => {
  el.setAttribute("shape-rendering", "crispEdges");
});

drawPrice();
drawVolume();
drawForce();
drawBig();
drawTime();
```
